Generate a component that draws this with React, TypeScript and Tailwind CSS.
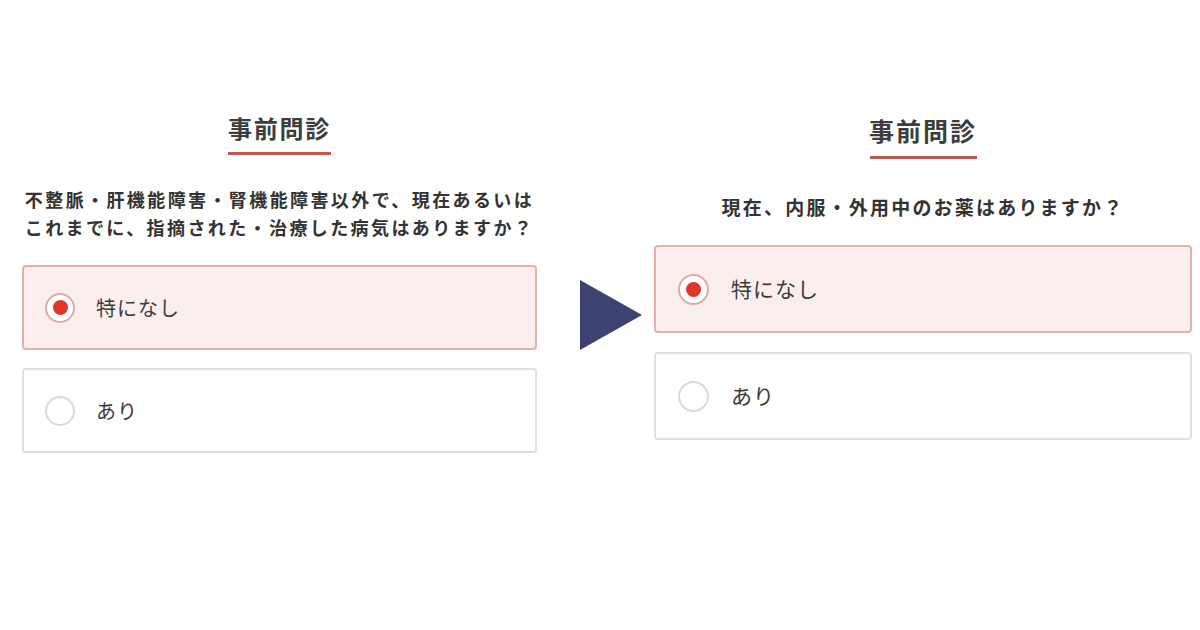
import React from 'react';

type Option = { label: string; selected: boolean };

const OPTIONS: Option[] = [
  { label: '特になし', selected: true },
  { label: 'あり', selected: false },
];

const font = { fontFamily: '"Noto Sans CJK JP", "Noto Sans", sans-serif' };

function Radio({ selected, size }: { selected: boolean; size: 'sm' | 'lg' }) {
  const outer = size === 'sm' ? 'w-[30px] h-[30px]' : 'w-[31px] h-[31px]';
  if (!selected) {
    return <span className={`${outer} shrink-0 rounded-full border-2 border-[#d9d8de] bg-white`} />;
  }
  return (
    <span className={`${outer} shrink-0 rounded-full border-2 border-[#e2aaa5] bg-white flex items-center justify-center`}>
      <span className="w-[15px] h-[15px] rounded-full bg-[#e0352b]" />
    </span>
  );
}

function OptionBox({ option, size }: { option: Option; size: 'sm' | 'lg' }) {
  const h = size === 'sm' ? 'h-[85px] px-[21px] gap-[21px]' : 'h-[88px] px-[22px] gap-[22px]';
  const text = size === 'sm' ? 'text-[20px] tracking-[1px]' : 'text-[21px] tracking-[1px]';
  return (
    <div
      className={`${h} flex items-center rounded-[4px] border-2 ${
        option.selected ? 'bg-[#fbefee] border-[#e8b0aa]' : 'bg-white border-[#dedde8]'
      }`}
    >
      <Radio selected={option.selected} size={size} />
      <span className={`${text} text-[#3b3b3b]`}>{option.label}</span>
    </div>
  );
}

function Title({ size }: { size: 'sm' | 'lg' }) {
  return (
    <div className="flex flex-col items-center">
      <h2
        className={`${
          size === 'sm' ? 'text-[24px] tracking-[1.8px]' : 'text-[25px] tracking-[2px]'
        } leading-[32px] font-bold text-[#3d3d3d]`}
      >
        事前問診
      </h2>
      <span
        className={`${
          size === 'sm' ? 'w-[103px] mt-[8px] bg-[#c4584c]' : 'w-[107px] mt-[10px] bg-[#b85a4f]'
        } h-[3px]`}
      />
    </div>
  );
}

export default function App() {
  return (
    <div className="w-[1200px] h-[630px] bg-white flex" style={font}>
      {/* ── Before ─────────────── */}
      <section className="w-[515px] ml-[22px] pt-[112px] flex flex-col">
        <Title size="sm" />
        <p className="mt-[30px] text-center text-[18px] leading-[28px] tracking-[2.4px] font-bold text-[#333]">
          不整脈・肝機能障害・腎機能障害以外で、現在あるいは
          <br />
          これまでに、指摘された・治療した病気はありますか？
        </p>
        <div className="mt-[24px] flex flex-col gap-[18px]">
          {OPTIONS.map((o) => (
            <OptionBox key={o.label} option={o} size="sm" />
          ))}
        </div>
      </section>

      {/* ── Arrow ──────────────── */}
      <div className="w-[117px] pt-[280px] pl-[43px] flex">
        <svg width="62" height="70" viewBox="0 0 62 70">
          <polygon points="0,0 62,35 0,70" fill="#3d4271" />
        </svg>
      </div>

      {/* ── After ──────────────── */}
      <section className="w-[538px] pt-[114px] flex flex-col">
        <Title size="lg" />
        <p className="mt-[34px] text-center text-[19px] leading-[28px] tracking-[2.2px] font-bold text-[#333]">
          現在、内服・外用中のお薬はありますか？
        </p>
        <div className="mt-[24px] flex flex-col gap-[19px]">
          {OPTIONS.map((o) => (
            <OptionBox key={o.label} option={o} size="lg" />
          ))}
        </div>
      </section>
    </div>
  );
}
